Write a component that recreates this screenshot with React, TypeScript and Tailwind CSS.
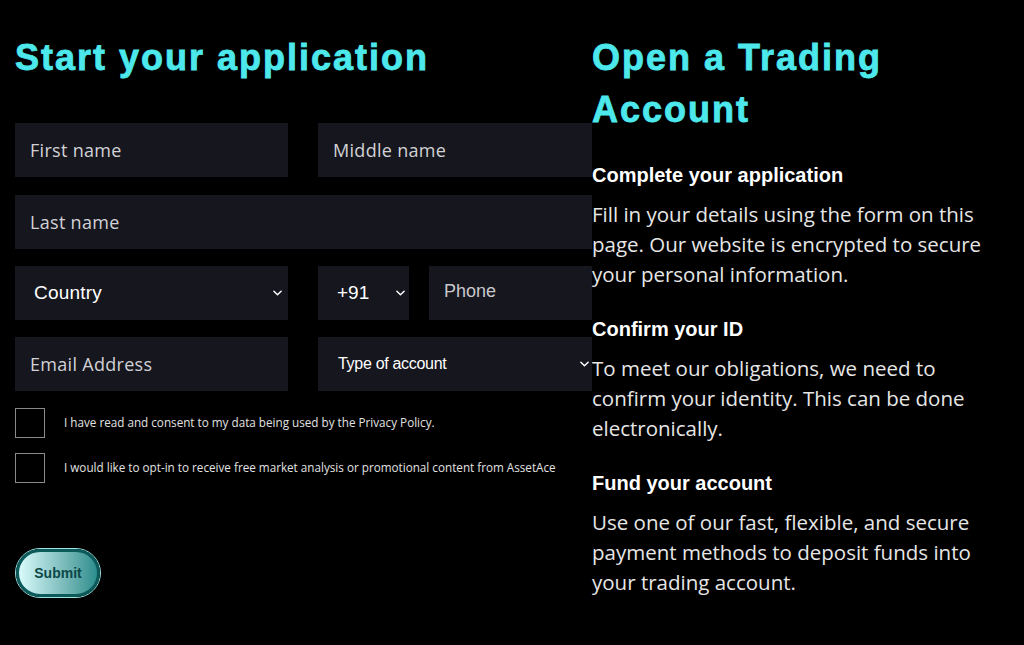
import React from "react";

const poppins = { fontFamily: '"Open Sans", "Noto Sans", sans-serif' };

function Chevron({ className = "" }: { className?: string }) {
  return (
    <svg viewBox="0 0 10 6" className={className} width="9" height="6" fill="none">
      <path d="M1 1l4 4 4-4" stroke="#ffffff" strokeWidth="1.6" strokeLinecap="round" strokeLinejoin="round" />
    </svg>
  );
}

function Field({ label, className = "" }: { label: string; className?: string }) {
  return (
    <div className={`h-[54px] bg-[#16161e] flex items-center pl-[15px] text-[18px] tracking-[0.3px] text-[#d2d2d6] ${className}`} style={poppins}>
      {label}
    </div>
  );
}

function Select({ label, className = "", textClass = "", chevronClass = "" }: { label: string; className?: string; textClass?: string; chevronClass?: string }) {
  return (
    <div className={`h-[54px] bg-[#16161e] flex items-center justify-between font-['Liberation_Sans',Arial,sans-serif] text-white ${className}`}>
      <span className={textClass}>{label}</span>
      <Chevron className={chevronClass} />
    </div>
  );
}

function Check({ label }: { label: string }) {
  return (
    <div className="flex items-center gap-[19px]">
      <div className="w-[30px] h-[30px] border border-[#8a8a8a] shrink-0" />
      <span className="text-[11.7px] text-[#e2e2e2]" style={poppins}>{label}</span>
    </div>
  );
}

export default function App() {
  return (
    <div className="w-full h-[645px] bg-black flex pl-[15px] pt-[32px] overflow-hidden">
      <div className="w-[577px] shrink-0 flex flex-col">
        <h1 className="font-['Liberation_Sans',Arial,sans-serif] font-bold text-[36px] leading-[52px] tracking-[2px] text-[#4de8ec] [-webkit-text-stroke:0.8px_#4de8ec]">
          Start your application
        </h1>
        <div className="mt-[39px] flex gap-[30px]">
          <Field label="First name" className="w-[273px]" />
          <Field label="Middle name" className="flex-1" />
        </div>
        <Field label="Last name" className="mt-[18px]" />
        <div className="mt-[17px] flex">
          <Select label="Country" className="w-[273px] pl-[19px] pr-[6px]" textClass="text-[19px] tracking-[0.2px]" />
          <Select label="+91" className="ml-[30px] w-[91px] pl-[19px] pr-[4px]" textClass="text-[19px]" />
          <div className="ml-[20px] flex-1 h-[54px] bg-[#16161e] flex items-center pl-[15px] pb-[4px] font-['Liberation_Sans',Arial,sans-serif] text-[18px] text-[#c8c8cc]">
            Phone
          </div>
        </div>
        <div className="mt-[17px] flex">
          <Field label="Email Address" className="w-[273px]" />
          <div className="ml-[30px] flex-1 h-[54px] relative bg-[#16161e] flex items-center pl-[20px] font-['Liberation_Sans',Arial,sans-serif] text-white">
            <span className="text-[16px] tracking-[-0.3px]">Type of account</span>
            <Chevron className="absolute right-[3px] top-[24px]" />
          </div>
        </div>
        <div className="mt-[17px] flex flex-col gap-[15px]">
          <Check label="I have read and consent to my data being used by the Privacy Policy." />
          <Check label="I would like to opt-in to receive free market analysis or promotional content from AssetAce" />
        </div>
        <div className="mt-[65px]">
          <button className="w-[86px] h-[50px] rounded-full border border-[#9fe3e3] p-0 bg-black">
            <div className="w-full h-full rounded-full border-[3px] border-[#0c5a5a] bg-gradient-to-r from-[#d9fbfb] to-[#2b8e8e] flex items-center justify-center font-['Liberation_Sans',Arial,sans-serif] font-bold text-[14px] text-[#0c4848]">
              Submit
            </div>
          </button>
        </div>
      </div>
      <div className="w-[420px] shrink-0 flex flex-col">
        <h1 className="font-['Liberation_Sans',Arial,sans-serif] font-bold text-[36px] leading-[52px] tracking-[2px] text-[#4de8ec] [-webkit-text-stroke:0.8px_#4de8ec]">
          Open a Trading
          <br />
          Account
        </h1>
        <Section
          className="mt-[27px]"
          title="Complete your application"
          lines={["Fill in your details using the form on this", "page. Our website is encrypted to secure", "your personal information."]}
        />
        <Section
          className="mt-[28px]"
          title="Confirm your ID"
          lines={["To meet our obligations, we need to", "confirm your identity. This can be done", "electronically."]}
        />
        <Section
          className="mt-[28px]"
          title="Fund your account"
          lines={["Use one of our fast, flexible, and secure", "payment methods to deposit funds into", "your trading account."]}
        />
      </div>
    </div>
  );
}

function Section({ title, lines, className = "" }: { title: string; lines: string[]; className?: string }) {
  return (
    <div className={className}>
      <h3 className="font-['Liberation_Sans',Arial,sans-serif] font-bold text-[20px] leading-[24px] text-white">{title}</h3>
      <p className="mt-[12px] text-[20.5px] leading-[30px] text-[#e6e6e6] whitespace-nowrap" style={poppins}>
        {lines.map((l, i) => (
          <span key={i} className="block">{l}</span>
        ))}
      </p>
    </div>
  );
}
